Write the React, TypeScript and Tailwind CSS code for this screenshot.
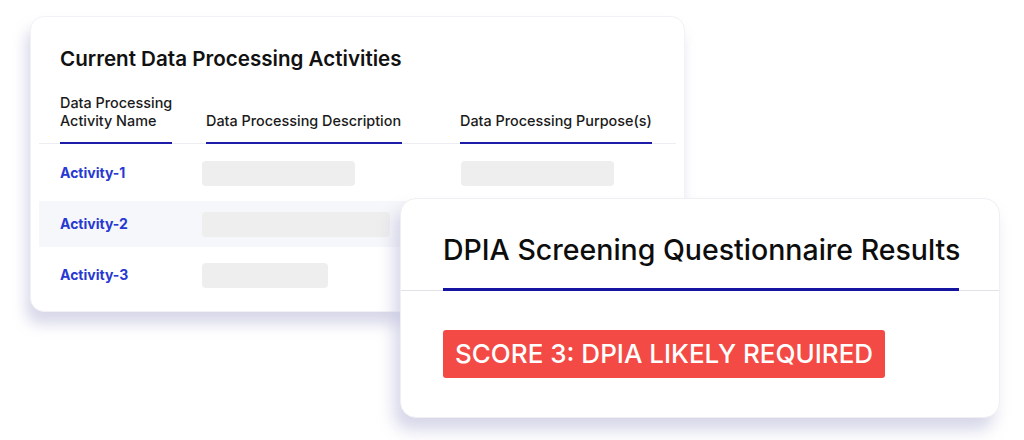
import React from 'react';

const activities = [
  { name: 'Activity-1', desc: 'w-[153px]', purpose: true, shaded: false },
  { name: 'Activity-2', desc: 'w-[188px]', purpose: false, shaded: true },
  { name: 'Activity-3', desc: 'w-[126px]', purpose: false, shaded: false },
];

const Placeholder: React.FC<{ className: string }> = ({ className }) => (
  <div className={`h-[25px] rounded-[4px] bg-[#eeeeee] ${className}`} />
);

export default function App() {
  return (
    <div
      className="relative w-[1024px] h-[440px] bg-white overflow-hidden"
      style={{ fontFamily: 'Inter, "Noto Sans", sans-serif' }}
    >
      <div className="pt-[16px] pl-[30px]">
        {/* activities card */}
        <div className="w-[655px] h-[296px] rounded-[14px] bg-white shadow-[-4px_12px_14px_rgba(200,200,225,0.7)] border border-[#f2f2f6] pt-[28px] pb-4">
          <h2 className="pl-[29px] text-[20.6px] leading-[28px] font-semibold text-[#111]">
            Current Data Processing Activities
          </h2>

          <div className="mt-[21px] mx-[8px] border-b border-[#eceef2] flex items-end whitespace-nowrap text-[14.4px] leading-[18px] font-medium text-[#1a1a1a]">
            <div className="ml-[21px] w-[112px] pb-[12px] border-b-2 border-[#1c1ca8] -mb-px">
              Data Processing
              <br />
              Activity Name
            </div>
            <div className="ml-[34px] w-[196px] pb-[12px] border-b-2 border-[#1c1ca8] -mb-px">
              Data Processing Description
            </div>
            <div className="ml-[58px] w-[192px] pb-[12px] border-b-2 border-[#1c1ca8] -mb-px">
              Data Processing Purpose(s)
            </div>
          </div>

          <div className="mt-[6px] mx-[8px] flex flex-col gap-[5px]">
            {activities.map((a) => (
              <div
                key={a.name}
                className={`h-[46px] flex items-center ${a.shaded ? 'bg-[#f6f7fa]' : ''}`}
              >
                <span className="ml-[21px] w-[142px] text-[14px] font-bold text-[#2838d2] -mt-px">
                  {a.name}
                </span>
                <Placeholder className={a.desc} />
                {a.purpose && <Placeholder className="ml-[106px] w-[153px]" />}
              </div>
            ))}
          </div>
        </div>
      </div>

      {/* results card, lying over the first one */}
      <div className="absolute left-[400px] top-[198px] w-[600px] h-[220px] rounded-[16px] bg-white shadow-[-6px_12px_16px_rgba(200,200,225,0.75)] border border-[#f0f0f4] flex flex-col">
        <div className="border-b border-[#e2e2e6] pt-[33px]">
          <h3 className="ml-[42px] text-[28.5px] leading-[36px] font-medium text-[#0d0d0d]">
            DPIA Screening Questionnaire Results
          </h3>
          <div className="ml-[42px] mr-[40px] mt-[20px] h-[3px] bg-[#1414a0] -mb-px" />
        </div>
        <div className="ml-[42px] mt-[39px]">
          <span className="inline-block rounded-[3px] bg-[#f44a45] px-[12px] py-[8px] text-[26px] leading-[32px] font-medium text-white">
            SCORE 3: DPIA LIKELY REQUIRED
          </span>
        </div>
      </div>
    </div>
  );
}
